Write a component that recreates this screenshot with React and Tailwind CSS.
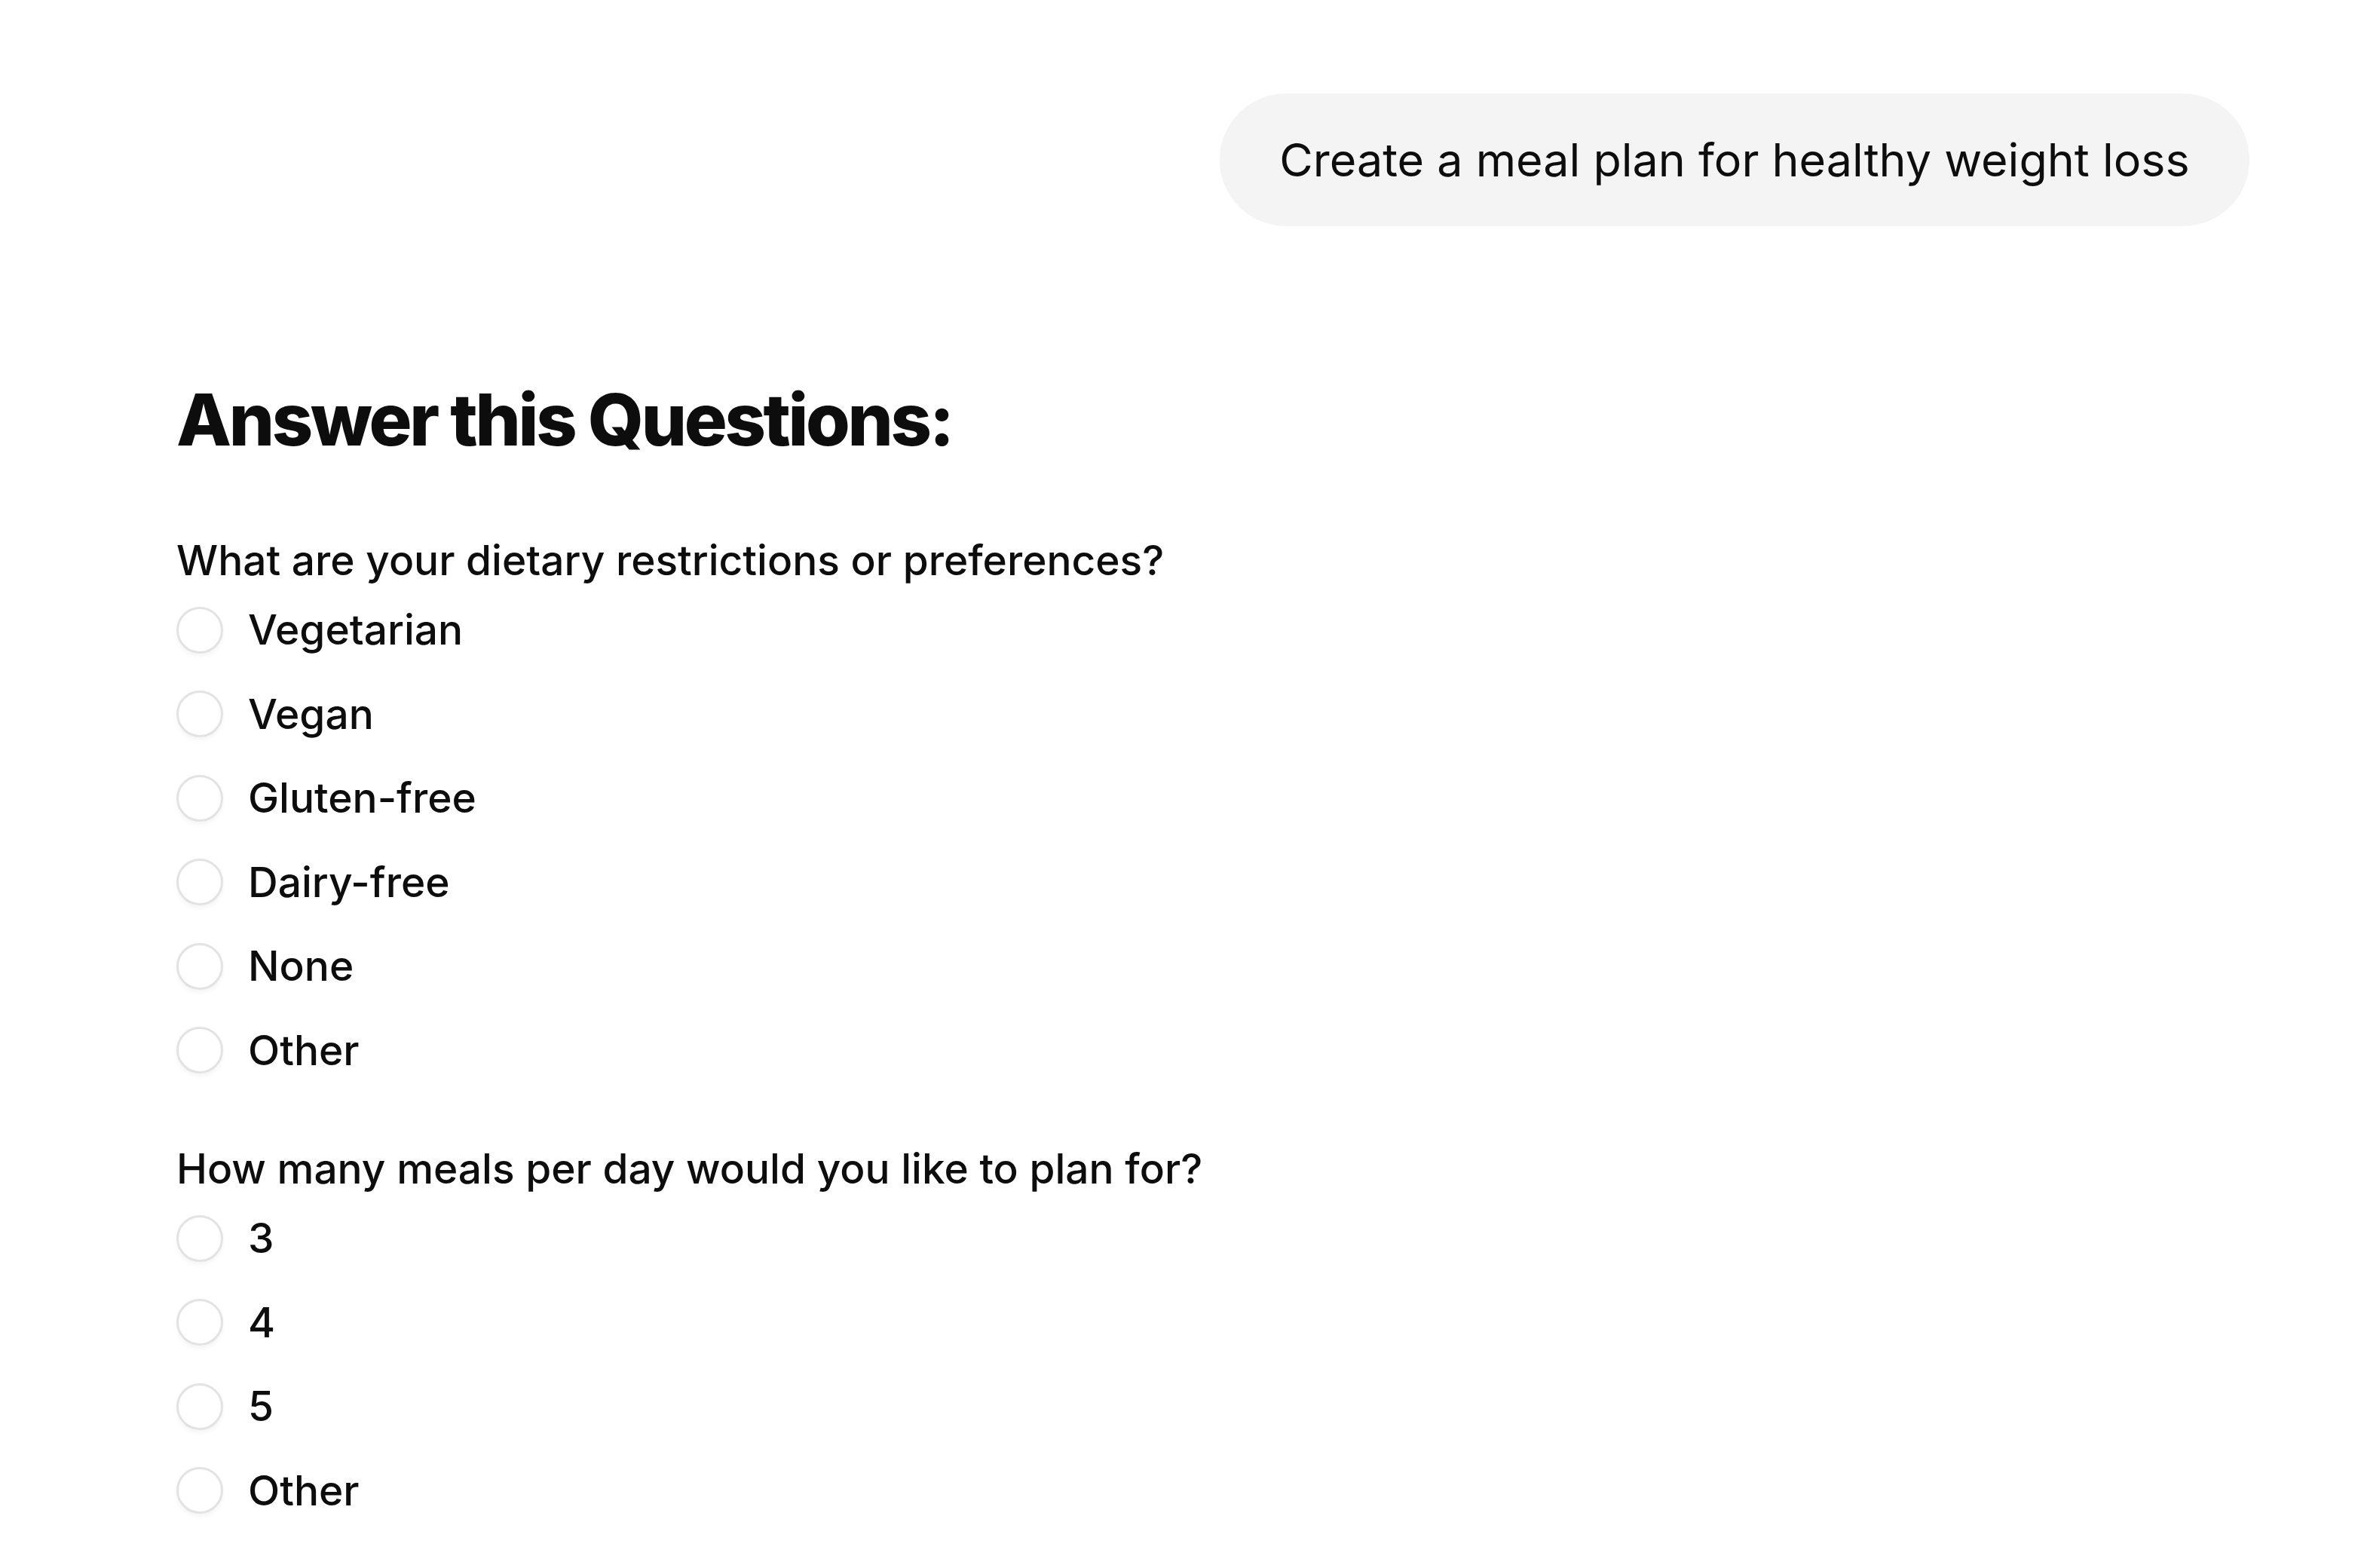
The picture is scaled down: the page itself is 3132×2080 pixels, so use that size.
import React from "react";

function Radio({ label }) {
  return (
    <div className="flex h-[111.5px] items-center">
      <span className="box-border block h-[62px] w-[62px] shrink-0 rounded-full border-[3px] border-[#e3e3e3] bg-white shadow-[0_4px_6px_rgba(0,0,0,0.04)]"></span>
      <span className="ml-[33px] text-[55px] font-medium leading-none text-[#0d0d0d]">{label}</span>
    </div>
  );
}

function Question({ title, options, className }) {
  return (
    <div className={className}>
      <div className="text-[55px] font-medium leading-[74px] text-[#0d0d0d]">{title}</div>
      <div className="flex flex-col">
        {options.map((o, i) => (
          <Radio key={i} label={o} />
        ))}
      </div>
    </div>
  );
}

export default function App() {
  return (
    <div
      className="min-h-[2080px] w-full bg-white pl-[234px] pr-[148px]"
      style={{ fontFamily: "Inter, 'Liberation Sans', sans-serif" }}
    >
      <div className="flex justify-end pt-[124px]">
        <div className="flex h-[176px] w-[1366px] items-center justify-center rounded-full bg-[#f4f4f4]">
          <span className="text-[61px] font-normal leading-none text-[#0d0d0d]">
            Create a meal plan for healthy weight loss
          </span>
        </div>
      </div>
      <h1 className="mt-[202px] text-[95px] font-extrabold leading-[110px] tracking-[-0.035em] text-[#0d0d0d]">
        Answer this Questions:
      </h1>
      <Question
        className="mt-[94px]"
        title="What are your dietary restrictions or preferences?"
        options={["Vegetarian", "Vegan", "Gluten-free", "Dairy-free", "None", "Other"]}
      />
      <Question
        className="mt-[64px]"
        title="How many meals per day would you like to plan for?"
        options={["3", "4", "5", "Other"]}
      />
    </div>
  );
}
